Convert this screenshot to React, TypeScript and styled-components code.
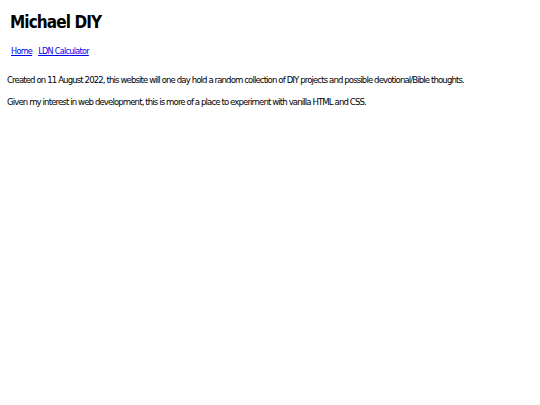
import styled, { createGlobalStyle } from "styled-components";

const GlobalStyle = createGlobalStyle`
  html, body {
    margin: 0;
    padding: 0;
    background: #ffffff;
  }
  body {
    font-family: "DejaVu Sans Condensed", "DejaVu Sans", sans-serif;
    color: #000000;
  }
`;

const Page = styled.div`
  padding: 0 7px;
`;

const Header = styled.header`
  padding: 0 3px;
`;

const SiteTitle = styled.h1`
  margin: 0;
  padding-top: 10px;
  font-size: 17px;
  font-weight: bold;
  letter-spacing: -0.9px;
  line-height: 24px;
`;

const Nav = styled.nav`
  display: flex;
  gap: 6px;
  margin-top: 12px;
  padding-left: 1px;
  font-size: 9px;
  letter-spacing: -0.7px;
`;

const NavLink = styled.a`
  color: #0000ee;
  text-decoration: underline;
`;

const Main = styled.main`
  margin-top: 18px;
`;

const Para = styled.p`
  margin: 0 0 10px;
  font-size: 9.5px;
  line-height: 12px;
  letter-spacing: -0.88px;
`;

export default function App() {
  return (
    <Page>
      <GlobalStyle />
      <Header>
        <SiteTitle>Michael DIY</SiteTitle>
        <Nav>
          <NavLink href="#">Home</NavLink>
          <NavLink href="#">LDN Calculator</NavLink>
        </Nav>
      </Header>
      <Main>
        <Para>
          Created on 11 August 2022, this website will one day hold a random collection of DIY
          projects and possible devotional/Bible thoughts.
        </Para>
        <Para>
          Given my interest in web development, this is more of a place to experiment with
          vanilla HTML and CSS.
        </Para>
      </Main>
    </Page>
  );
}
